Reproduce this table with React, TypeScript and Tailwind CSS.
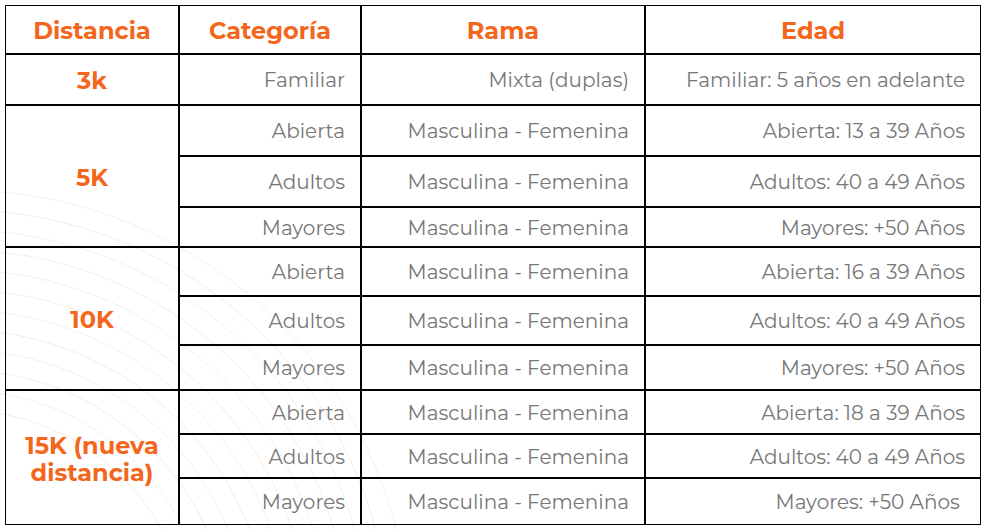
import React from "react";

type Row = { cat: string; rama: string; edad: string; h: string };
type Group = { dist: React.ReactNode; rows: Row[] };

const groups: Group[] = [
  {
    dist: "3k",
    rows: [{ cat: "Familiar", rama: "Mixta (duplas)", edad: "Familiar: 5 años en adelante", h: "h-[51px]" }],
  },
  {
    dist: "5K",
    rows: [
      { cat: "Abierta", rama: "Masculina - Femenina", edad: "Abierta: 13 a 39 Años", h: "h-[51px]" },
      { cat: "Adultos", rama: "Masculina - Femenina", edad: "Adultos: 40 a 49 Años", h: "h-[51px]" },
      { cat: "Mayores", rama: "Masculina - Femenina", edad: "Mayores: +50 Años", h: "h-[40px]" },
    ],
  },
  {
    dist: "10K",
    rows: [
      { cat: "Abierta", rama: "Masculina - Femenina", edad: "Abierta: 16 a 39 Años", h: "h-[49px]" },
      { cat: "Adultos", rama: "Masculina - Femenina", edad: "Adultos: 40 a 49 Años", h: "h-[49px]" },
      { cat: "Mayores", rama: "Masculina - Femenina", edad: "Mayores: +50 Años", h: "h-[45px]" },
    ],
  },
  {
    dist: (
      <>
        15K (nueva
        <br />
        distancia)
      </>
    ),
    rows: [
      { cat: "Abierta", rama: "Masculina - Femenina", edad: "Abierta: 18 a 39 Años", h: "h-[44px]" },
      { cat: "Adultos", rama: "Masculina - Femenina", edad: "Adultos: 40 a 49 Años", h: "h-[44px]" },
      { cat: "Mayores", rama: "Masculina - Femenina", edad: "Mayores: +50 Años\u00a0", h: "h-[47px]" },
    ],
  },
];

const cell = "border border-black p-0 pr-[15px] pt-[1px] text-right align-middle";
const head = "border border-black p-0 pt-[2px] text-center align-middle text-[24px] font-bold text-[#f4661b]";

function Arcs() {
  const radii = [230, 250, 270, 290, 310, 330, 350, 370, 390, 410, 430, 450];
  return (
    <svg className="pointer-events-none absolute left-0 top-0" width="985" height="529">
      {radii.map((r, i) => (
        <circle
          key={r}
          cx="-40"
          cy="640"
          r={r}
          fill="none"
          stroke={i % 2 === 0 ? "#f7dccb" : "#d7ecef"}
          strokeWidth="1"
          opacity="0.6"
        />
      ))}
    </svg>
  );
}

export default function App() {
  return (
    <div className="relative h-[529px] w-[985px] overflow-hidden bg-white p-[5px] font-['Montserrat','Inter',sans-serif]">
      <Arcs />
      <table className="relative w-[976px] table-fixed border-separate border-spacing-0 text-[20px] text-[#777777]">
        <colgroup>
          <col className="w-[174px]" />
          <col className="w-[182px]" />
          <col className="w-[284px]" />
          <col className="w-[336px]" />
        </colgroup>
        <thead>
          <tr className="h-[49px]">
            <th className={head}>Distancia</th>
            <th className={head}>Categoría</th>
            <th className={head}>Rama</th>
            <th className={head}>Edad</th>
          </tr>
        </thead>
        <tbody>
          {groups.map((g, gi) =>
            g.rows.map((r, ri) => (
              <tr key={`${gi}-${ri}`} className={r.h}>
                {ri === 0 && (
                  <td
                    rowSpan={g.rows.length}
                    className="border border-black p-0 pt-[2px] text-center align-middle text-[24px] font-bold leading-[27px] text-[#f4661b]"
                  >
                    {g.dist}
                  </td>
                )}
                <td className={cell}>{r.cat}</td>
                <td className={cell}>{r.rama}</td>
                <td className={cell}>{r.edad}</td>
              </tr>
            ))
          )}
        </tbody>
      </table>
    </div>
  );
}
